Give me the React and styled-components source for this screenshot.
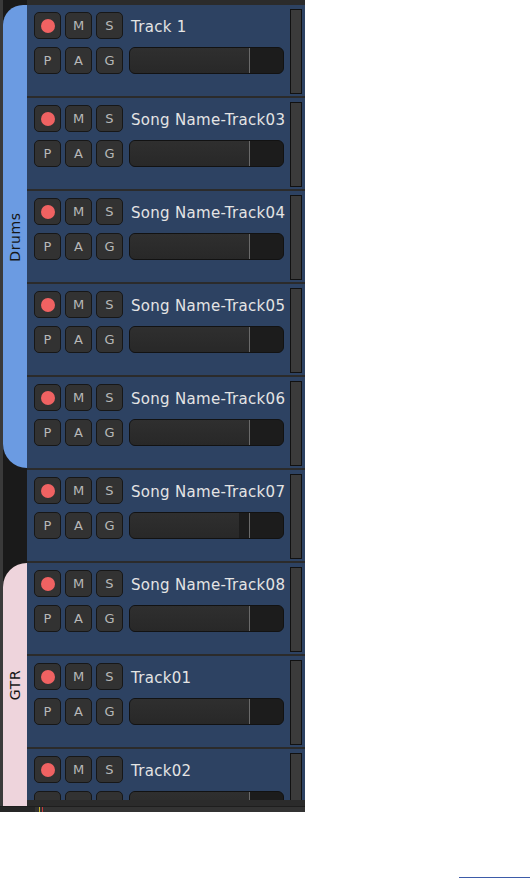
import React from "react";
import styled, { createGlobalStyle } from "styled-components";

const Global = createGlobalStyle`
  html, body { margin: 0; padding: 0; background: #ffffff; }
  body { font-family: "DejaVu Sans", "Liberation Sans", sans-serif; }
`;

const Page = styled.div`
  display: flex;
  flex-direction: column;
  height: 878px;
`;

const Panel = styled.div`
  width: 305px;
  height: 812px;
  display: flex;
  flex-direction: column;
  background: #2b2b2b;
  overflow: hidden;
`;

const Main = styled.div`
  height: 806px;
  display: flex;
`;

const Edge = styled.div`
  width: 3px;
  background: #3a3a3a;
`;

const GroupColumn = styled.div`
  width: 24px;
  flex-shrink: 0;
  background: #1a1a1a;
  display: flex;
  flex-direction: column;
  padding-top: ${(p) => p.$top}px;
`;

const GroupTab = styled.div`
  flex-shrink: 0;
  height: ${(p) => p.$h}px;
  margin-top: ${(p) => p.$mt || 0}px;
  background: ${(p) => p.$color};
  border-radius: ${(p) => p.$radius};
  display: flex;
  align-items: center;
  justify-content: center;
`;

const GroupLabel = styled.span`
  transform: rotate(-90deg);
  font-size: 14px;
  letter-spacing: 0.6px;
  color: #161616;
  white-space: nowrap;
`;

const TrackColumn = styled.div`
  flex: 1;
  min-width: 0;
  display: flex;
  flex-direction: column;
  padding: 5px 0 6px 0;
`;

const TrackScroll = styled.div`
  flex: 1;
  overflow: hidden;
  display: flex;
  flex-direction: column;
  gap: 2px;
`;

const Track = styled.div`
  flex: 0 0 91px;
  background: #2d4262;
  display: flex;
  padding: 0 3px 0 7px;
  box-sizing: border-box;
`;

const Controls = styled.div`
  flex: 1;
  min-width: 0;
  display: flex;
  flex-direction: column;
  gap: 8px;
  padding-top: 7px;
`;

const Row = styled.div`
  display: flex;
  align-items: center;
  gap: 4px;
`;

const Btn = styled.div`
  flex-shrink: 0;
  width: 27px;
  height: 27px;
  box-sizing: border-box;
  border: 1px solid #171717;
  border-radius: 5px;
  background: #323232;
  color: #b8b8b8;
  font-size: 13px;
  display: flex;
  align-items: center;
  justify-content: center;
`;

const RecDot = styled.span`
  width: 14px;
  height: 14px;
  border-radius: 50%;
  background: #f06262;
`;

const Name = styled.span`
  flex-shrink: 0;
  margin-left: 4px;
  padding-top: 3px;
  font-size: 15px;
  letter-spacing: 0.3px;
  color: #e4e4e4;
  white-space: nowrap;
`;

const Fader = styled.div`
  flex-shrink: 0;
  margin-left: 2px;
  width: 155px;
  height: 27px;
  box-sizing: border-box;
  border: 1px solid #121212;
  border-radius: 6px;
  background: #1c1c1c;
  position: relative;
  overflow: hidden;
`;

const FaderFill = styled.div`
  height: 100%;
  background: linear-gradient(#2f2f2f, #282828);
`;

const FaderMark = styled.div`
  position: absolute;
  top: 0;
  bottom: 0;
  width: 1px;
  background: #6a6a6a;
`;

const Meter = styled.div`
  flex-shrink: 0;
  width: 12px;
  height: 85px;
  margin-top: 4px;
  margin-left: 6px;
  box-sizing: border-box;
  border: 1px solid #111;
  background: #3b3b3b;
`;

const BottomBar = styled.div`
  height: 6px;
  display: flex;
  align-items: stretch;
  background: #333333;
  border-top: 1px solid #1e1e1e;
  box-sizing: border-box;
`;

const BottomBlock = styled.div`
  width: 35px;
  background: #262626;
`;

const Tick = styled.div`
  width: 1px;
  margin-left: ${(p) => p.$ml}px;
  background: ${(p) => p.$c};
`;

const Spacer = styled.div`
  flex: 1;
`;

const CornerLine = styled.div`
  align-self: flex-end;
  width: 71px;
  height: 1px;
  background: #3d5ba8;
`;

const tracks = [
  { name: "Track 1", fill: 120 },
  { name: "Song Name-Track03", fill: 120 },
  { name: "Song Name-Track04", fill: 120 },
  { name: "Song Name-Track05", fill: 120 },
  { name: "Song Name-Track06", fill: 120 },
  { name: "Song Name-Track07", fill: 109 },
  { name: "Song Name-Track08", fill: 120 },
  { name: "Track01", fill: 120 },
  { name: "Track02", fill: 120 },
];

function TrackStrip({ name, fill }) {
  return (
    <Track>
      <Controls>
        <Row>
          <Btn>
            <RecDot />
          </Btn>
          <Btn>M</Btn>
          <Btn>S</Btn>
          <Name>{name}</Name>
        </Row>
        <Row>
          <Btn>P</Btn>
          <Btn>A</Btn>
          <Btn>G</Btn>
          <Fader>
            <FaderFill style={{ width: fill }} />
            <FaderMark style={{ left: 119 }} />
          </Fader>
        </Row>
      </Controls>
      <Meter />
    </Track>
  );
}

export default function App() {
  return (
    <>
      <Global />
      <Page>
        <Panel>
          <Main>
            <Edge />
            <GroupColumn $top={5}>
              <GroupTab $h={463} $color="#6b9be2" $radius="20px 0 0 24px">
                <GroupLabel>Drums</GroupLabel>
              </GroupTab>
              <GroupTab $h={243} $mt={95} $color="#eed4dc" $radius="24px 0 0 0">
                <GroupLabel>GTR</GroupLabel>
              </GroupTab>
            </GroupColumn>
            <TrackColumn>
              <TrackScroll>
                {tracks.map((t) => (
                  <TrackStrip key={t.name} {...t} />
                ))}
              </TrackScroll>
            </TrackColumn>
          </Main>
          <BottomBar>
            <BottomBlock />
            <Tick $ml={4} $c="#c9b52a" />
            <Tick $ml={2} $c="#c83a3a" />
          </BottomBar>
        </Panel>
        <Spacer />
        <CornerLine />
      </Page>
    </>
  );
}
